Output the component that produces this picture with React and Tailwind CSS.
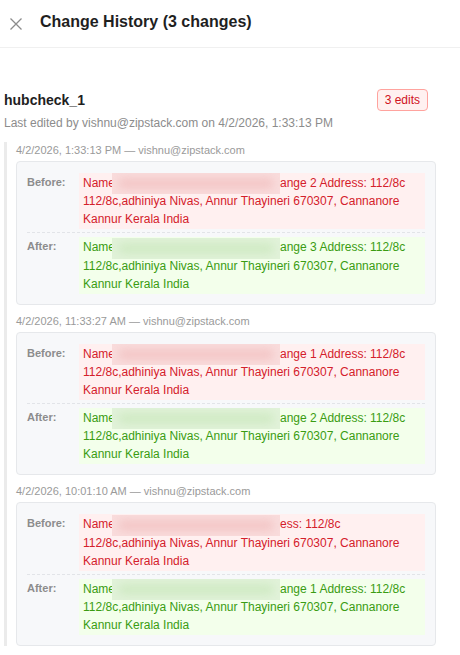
import React from 'react';

const font = { fontFamily: '"Liberation Sans", Arial, sans-serif' };

const ADDRESS = '112/8c,adhiniya Nivas, Annur Thayineri 670307, Cannanore Kannur Kerala India';

const history = [
  {
    when: '4/2/2026, 1:33:13 PM',
    by: 'vishnu@zipstack.com',
    before: 'ange 2 Address: 112/8c',
    after: 'ange 3 Address: 112/8c',
  },
  {
    when: '4/2/2026, 11:33:27 AM',
    by: 'vishnu@zipstack.com',
    before: 'ange 1 Address: 112/8c',
    after: 'ange 2 Address: 112/8c',
  },
  {
    when: '4/2/2026, 10:01:10 AM',
    by: 'vishnu@zipstack.com',
    before: 'ess: 112/8c',
    after: 'ange 1 Address: 112/8c',
  },
];

// masked chunk of the value (personal data is hidden)
const Mask = ({ tone }) => (
  <span
    className={`inline-block align-middle -my-[2px] -ml-[3px] w-[168px] h-[21px] overflow-hidden ${
      tone === 'red' ? 'bg-[#f9dcdc]' : 'bg-[#e1f2d9]'
    }`}
  >
    <span
      className={`block mx-[6px] mt-[5px] h-[11px] rounded-full blur-[4px] ${
        tone === 'red' ? 'bg-[#f3c6c6]' : 'bg-[#d0eac4]'
      }`}
    />
  </span>
);

const DiffValue = ({ tone, tail }) => (
  <div
    className={`flex-1 px-[4px] py-[1px] text-[12px] leading-[18px] ${
      tone === 'red' ? 'bg-[#fff0f0] text-[#d4202b]' : 'bg-[#f3ffeb] text-[#3a9c12]'
    }`}
  >
    Name
    <Mask tone={tone} />
    {tail} {ADDRESS}
  </div>
);

const HistoryEntry = ({ entry }) => (
  <div className="mb-[8px]">
    <div className="text-[11px] leading-[16px] text-[#9a9a9a] mb-[3px]">
      {entry.when} — {entry.by}
    </div>
    <div className="bg-[#f7f8fa] border border-[#e6e8eb] rounded-[4px] px-[10px] py-[7px]">
      <div className="flex pt-[4px] pb-[3px] border-b border-dashed border-[#e2e4e8]">
        <div className="w-[52px] shrink-0 text-[11px] font-bold text-[#8c8c8c] leading-[18px]">Before:</div>
        <DiffValue tone="red" tail={entry.before} />
      </div>
      <div className="flex pt-[4px] pb-[3px]">
        <div className="w-[52px] shrink-0 text-[11px] font-bold text-[#8c8c8c] leading-[18px]">After:</div>
        <DiffValue tone="green" tail={entry.after} />
      </div>
    </div>
  </div>
);

export default function App() {
  return (
    <div className="w-[460px] h-[655px] overflow-hidden bg-white" style={font}>
      {/* Drawer header */}
      <div className="flex items-center h-[48px] border-b border-[#f0f0f0] pl-[10px]">
        <svg width="12" height="12" viewBox="0 0 12 12" className="shrink-0">
          <path d="M0.5 0.5 L11.5 11.5 M11.5 0.5 L0.5 11.5" stroke="#8c8c8c" strokeWidth="1.3" />
        </svg>
        <h2 className="ml-[18px] text-[16px] font-bold text-[#1f1f1f] leading-[24px] -mt-[3px]">
          Change History (3 changes)
        </h2>
      </div>

      <div className="pl-[4px] pr-[24px] pt-[41px]">
        <div className="flex items-center justify-between h-[22px]">
          <span className="text-[14px] font-bold text-[#1f1f1f]">hubcheck_1</span>
          <span className="mr-[8px] px-[7px] h-[22px] flex items-center rounded-[4px] border border-[#ffa39e] bg-[#fff1f0] text-[12px] text-[#cf1322]">
            3 edits
          </span>
        </div>
        <div className="text-[12px] leading-[20px] text-[#8c8c8c] mt-[2px]">
          Last edited by vishnu@zipstack.com on 4/2/2026, 1:33:13 PM
        </div>

        <div className="mt-[9px] border-l-[3px] border-[#ebebeb] pl-[9px]">
          {history.map((entry) => (
            <HistoryEntry key={entry.when} entry={entry} />
          ))}
        </div>
      </div>
    </div>
  );
}
